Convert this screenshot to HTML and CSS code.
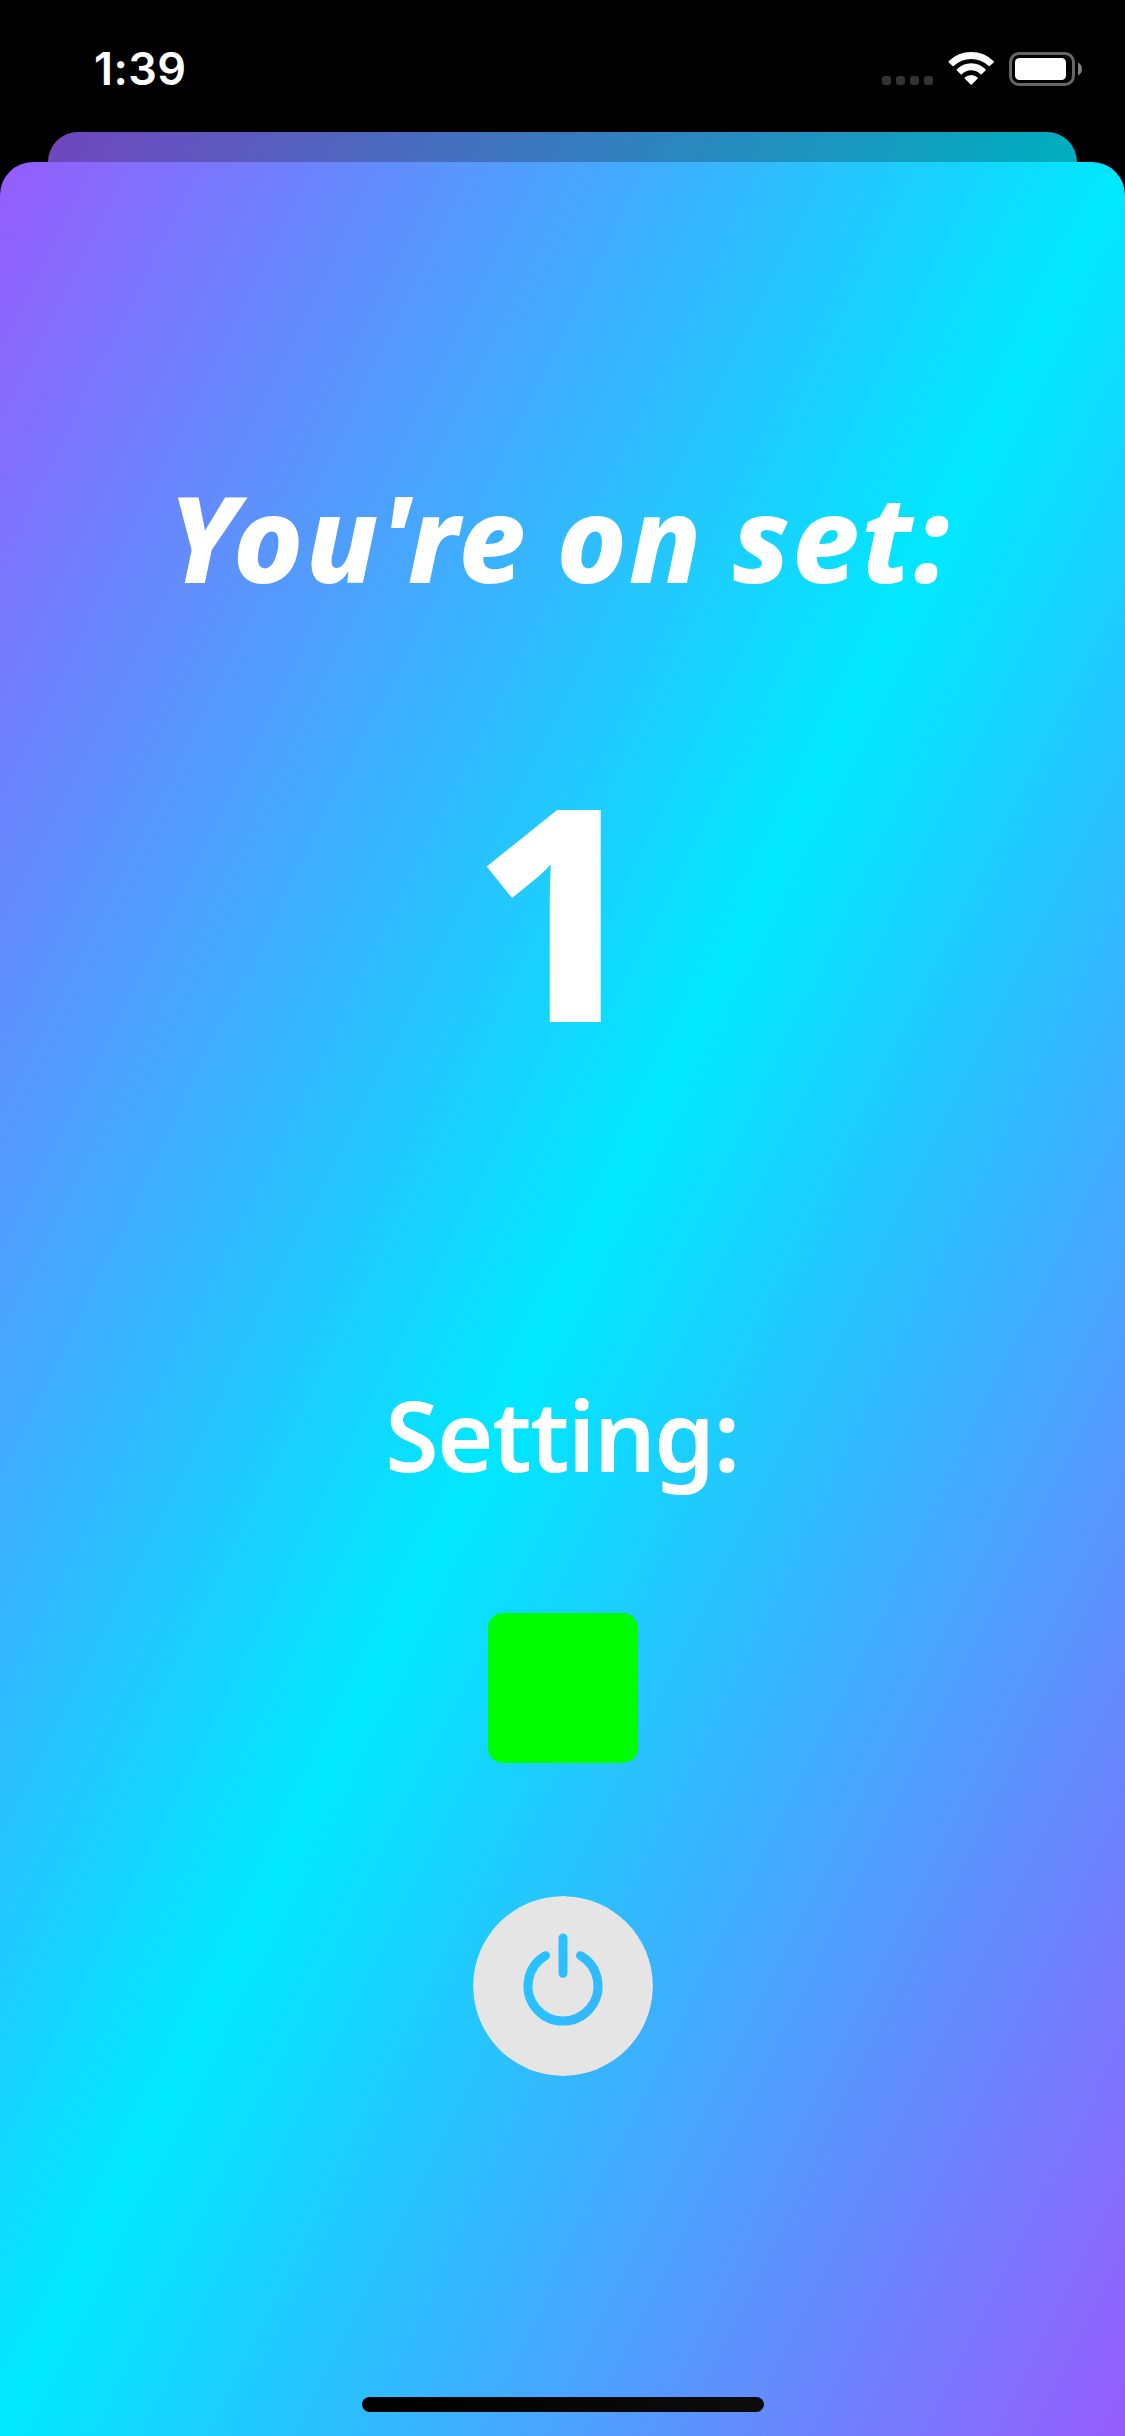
FILE: index.html
```html
<!DOCTYPE html>
<html lang="en">
<head>
<meta charset="utf-8">
<title>Workout set</title>
<link rel="stylesheet" href="styles.css">
</head>
<body>
<div class="screen">
  <header class="status-bar">
    <span class="time">1:39</span>
    <svg class="status-icons" width="202" height="36" viewBox="881 51 202 36" aria-hidden="true">
      <g fill="#333">
        <rect x="882" y="76" width="9" height="9" rx="3"/>
        <rect x="896" y="76" width="9" height="9" rx="3"/>
        <rect x="910" y="76" width="9" height="9" rx="3"/>
        <rect x="924" y="76" width="9" height="9" rx="3"/>
      </g>
      <g fill="#fff">
        <path d="M948.6 61.3 Q958 52 971.2 52 Q984.400 52 993.8 61.3 Q994 62 993.600 62.400 L989.800 66.100 Q989.200 66.400 988.700 66 Q981 59 971.200 59 Q961.400 59 953.700 66 Q953.200 66.400 952.600 66.100 L948.800 62.400 Q948.400 62 948.600 61.300Z"/>
        <path d="M956.800 69.300 Q962.800 63.200 971.200 63.200 Q979.600 63.200 985.600 69.300 Q986 70 985.500 70.500 L981.700 74.200 Q981.200 74.600 980.600 74.200 Q976.600 70.300 971.200 70.300 Q965.800 70.300 961.800 74.200 Q961.200 74.600 960.700 74.200 L956.900 70.500 Q956.400 70 956.800 69.300Z"/>
        <path d="M964.700 77.400 Q967.500 74.900 971.200 74.900 Q974.900 74.900 977.700 77.400 Q978.100 78 977.700 78.400 L971.800 84.400 Q971.200 84.900 970.600 84.400 L964.700 78.400 Q964.300 78 964.700 77.400Z"/>
      </g>
      <rect x="1010.500" y="53.500" width="63" height="31" rx="8.500" fill="none" stroke="#666" stroke-width="3"/>
      <rect x="1015" y="58" width="51" height="22" rx="4.500" fill="#fff"/>
      <path d="M1078 62.500 Q1082 64.500 1082 69 Q1082 73.500 1078 75.500Z" fill="#808080"/>
    </svg>
  </header>
  <div class="sheet-behind"></div>
  <main class="sheet">
    <h1 class="heading">You're on set:</h1>
    <div class="count">1</div>
    <h2 class="setting">Setting:</h2>
    <div class="swatch"></div>
    <button class="power" aria-label="Power">
      <svg width="180" height="180" viewBox="-90 -90 180 180">
        <mask id="cut">
          <circle r="90" fill="#fff"/>
          <path d="M-17.500 -30.300 A35 35 0 1 0 17.500 -30.300 M0 -48 V-12.700" fill="none" stroke="#000" stroke-width="9" stroke-linecap="round"/>
        </mask>
        <circle r="90" fill="#e5e5e5" mask="url(#cut)"/>
      </svg>
    </button>
    <div class="home-bar"></div>
  </main>
</div>
</body>
</html>
```
FILE: styles.css
```css
* { box-sizing: border-box; margin: 0; padding: 0; }
body { background: #000; }
.screen {
  width: 1125px;
  height: 2436px;
  display: flex;
  flex-direction: column;
  background: #000;
  overflow: hidden;
  color: #fff;
}
.status-bar {
  height: 132px;
  flex: none;
  display: flex;
  justify-content: space-between;
  align-items: flex-start;
  padding: 51px 42px 0 94px;
}
.time {
  font: 600 45px/36px Inter, "Liberation Sans", sans-serif;
  letter-spacing: 0.4px;
}
.sheet-behind {
  flex: none;
  height: 30px;
  margin: 0 48px;
  border-radius: 30px 30px 0 0;
  background: linear-gradient(to bottom right, #7146be, #00aebf 50%, #7146be) 0 0 / 1029px 2228px no-repeat;
}
.sheet {
  flex: 1;
  display: flex;
  flex-direction: column;
  align-items: center;
  border-radius: 33px 33px 0 0;
  padding: 303px 0 24px 1px;
  background: linear-gradient(to bottom right, #965cfc, #00e8ff 50%, #965cfc);
}
.heading {
  font: italic 800 119px/144px "Noto Sans", sans-serif;
  height: 144px;
  padding-right: 7px;
  letter-spacing: 1.8px;
  word-spacing: -4px;
  white-space: nowrap;
}
.count {
  font: 800 297px/360px "Noto Sans", sans-serif;
  height: 360px;
  margin-top: 118px;
  padding-right: 11px;
}
.setting {
  font: 600 97px/120px "Noto Sans", sans-serif;
  height: 120px;
  margin-top: 287px;
  padding-right: 2px;
  letter-spacing: -1.5px;
  white-space: nowrap;
}
.swatch {
  width: 150px;
  height: 150px;
  margin-top: 119px;
  border-radius: 15px;
  background: #00fe00;
}
.power {
  width: 180px;
  height: 180px;
  margin-top: 133px;
  border: 0;
  background: none;
}
.power svg { display: block; }
.home-bar {
  width: 402px;
  height: 15px;
  margin-top: auto;
  border-radius: 8px;
  background: linear-gradient(90deg, #000, #0c0c0c);
}
```
